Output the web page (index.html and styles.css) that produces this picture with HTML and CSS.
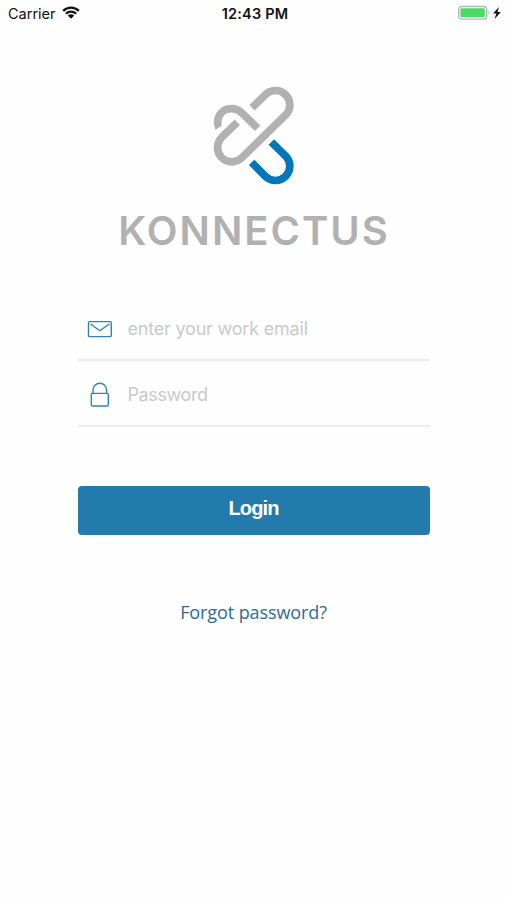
FILE: index.html
```
<!DOCTYPE html>
<html lang="en">
<head>
    <meta charset="UTF-8">
    <meta name="viewport" content="width=device-width, initial-scale=1.0">
    <title>Konnectus</title>

    <link rel="stylesheet" href="styles.css">
</head>

<body>
    <!-- Status bar -->
    <div class="status-bar">
        <div class="status-left">
            <span class="carrier">Carrier</span>
            <svg class="wifi" viewBox="0 0 18 13" width="18" height="13">
                <path d="M1.2 4.9a11 11 0 0 1 15.6 0M3.9 7.7a7.2 7.2 0 0 1 10.2 0" fill="none" stroke="#111" stroke-width="2.3"/>
                <path d="M5.8 9.6a4.5 4.5 0 0 1 6.4 0L9 12.8z" fill="#111"/>
            </svg>
        </div>
        <div class="status-time">12:43 PM</div>
        <div class="status-right">
            <svg class="battery" viewBox="0 0 44 16" width="44" height="16">
                <rect x=".7" y="1.5" width="28" height="12.6" rx="3.2" fill="#fff" stroke="#b5b5b5" stroke-width="1.4"/>
                <rect x="2.4" y="3.3" width="24.4" height="9" rx="1.2" fill="#4cd964"/>
                <path d="M30.3 5.8c1.6.6 1.6 3.4 0 4z" fill="#b5b5b5"/>
                <path d="M41 2l-6 6.6h3.4L36.5 14l6.4-7h-3.4z" fill="#111"/>
            </svg>
        </div>
    </div>

    <div class="login">
        <div class="logo">
            <svg class="logo-mark" viewBox="0 0 330 360" width="110" height="120">
                <g fill="none" stroke-width="23">
                    <path d="M156 98L196.600 58.600A43 43 0 0 1 257.400 119.400L125.400 248.400A43 43 0 0 1 64.600 187.600L112 142" stroke="#b1b1b1"/>
                    <path d="M53 150C51 122 66 101 95 101Q112 101 126 114L173 160" stroke="#b1b1b1"/>
                    <path d="M41.500 145L46 164L64.500 153V146z" fill="#b1b1b1"/>
                    <path d="M214 201L257.400 243.600A43 43 0 0 1 196.600 304.400L155 262" stroke="#0077b8"/>
                </g>
            </svg>
            <h1 class="logo-name">KONNECTUS</h1>
        </div>

        <form class="login-form">
            <label class="field">
                <svg class="field-icon" viewBox="0 0 26 26" width="26" height="26">
                    <g fill="none" stroke="#3183b3" stroke-width="1.4" stroke-linejoin="round">
                        <rect x="1.500" y="5.600" width="22.800" height="15" rx="1.200"/>
                        <path d="M3.500 8L12.800 14.800L22.300 8"/>
                    </g>
                </svg>
                <input class="field-input email" type="text" placeholder="enter your work email">
            </label>
            <label class="field">
                <svg class="field-icon" viewBox="0 0 26 26" width="26" height="26">
                    <g fill="none" stroke="#3183b3" stroke-width="1.4" stroke-linejoin="round">
                        <rect x="4.300" y="11.400" width="17" height="12.600" rx="1.200"/>
                        <path d="M6 11.400V8.100a6.800 6.800 0 0 1 13.600 0v3.300"/>
                    </g>
                </svg>
                <input class="field-input password" type="password" placeholder="Password">
            </label>
            <button class="login-button" type="button">Login</button>
        </form>

        <a class="forgot" href="#">Forgot password?</a>
    </div>
</body>
</html>
```
FILE: styles.css
```
* {
    padding: 0;
    margin: 0;
    box-sizing: border-box;
}

body {
    min-height: 900px;
    background-color: #fefefe;
    font-family: "Inter", sans-serif;
}

/* Status bar */
.status-bar {
    display: grid;
    grid-template-columns: 1fr auto 1fr;
    align-items: center;
    height: 28px;
    padding: 0 5px 2px 8px;
    font-size: 14.5px;
    color: #111;
}

.status-left {
    display: flex;
    align-items: center;
    gap: 6px;
}

.wifi {
    margin-top: -1px;
}

.status-time {
    font-weight: 600;
    letter-spacing: 0.2px;
}

.status-right {
    display: flex;
    justify-content: flex-end;
}

.login {
    display: flex;
    flex-direction: column;
    align-items: center;
    padding-top: 47px;
}

/* Logo */
.logo {
    display: flex;
    flex-direction: column;
    align-items: center;
}

.logo-mark {
    margin-left: 3px;
}

.logo-name {
    height: 60px;
    margin-top: 5px;
    margin-left: 1px;
    font-size: 40px;
    font-weight: 600;
    line-height: 61px;
    letter-spacing: 2px;
    color: #b1b1b1;
}

/* Form */
.login-form {
    width: 352px;
    margin-top: 35px;
}

.field {
    display: flex;
    align-items: center;
    height: 66px;
    padding: 3px 0 0 9px;
    border-bottom: 2px solid #ececec;
}

.field-icon {
    flex: none;
}

.field-input {
    width: 290px;
    margin-left: 15px;
    border: none;
    outline: none;
    background: transparent;
    font-family: "Inter", sans-serif;
    font-size: 18px;
    letter-spacing: -0.2px;
}

.password {
    letter-spacing: -0.4px;
}

.field-input::placeholder {
    color: #c9c9cb;
}

.login-button {
    display: block;
    width: 100%;
    height: 49px;
    margin-top: 59px;
    padding-bottom: 4px;
    border: none;
    border-radius: 4px;
    background-color: #237bad;
    font-family: "Liberation Sans", sans-serif;
    font-size: 20px;
    font-weight: 700;
    letter-spacing: -0.9px;
    color: #fff;
}

.forgot {
    margin-top: 65px;
    font-family: "Open Sans", sans-serif;
    font-size: 18px;
    line-height: 24px;
    letter-spacing: -0.1px;
    color: #2b6d99;
    text-decoration: none;
}
```
